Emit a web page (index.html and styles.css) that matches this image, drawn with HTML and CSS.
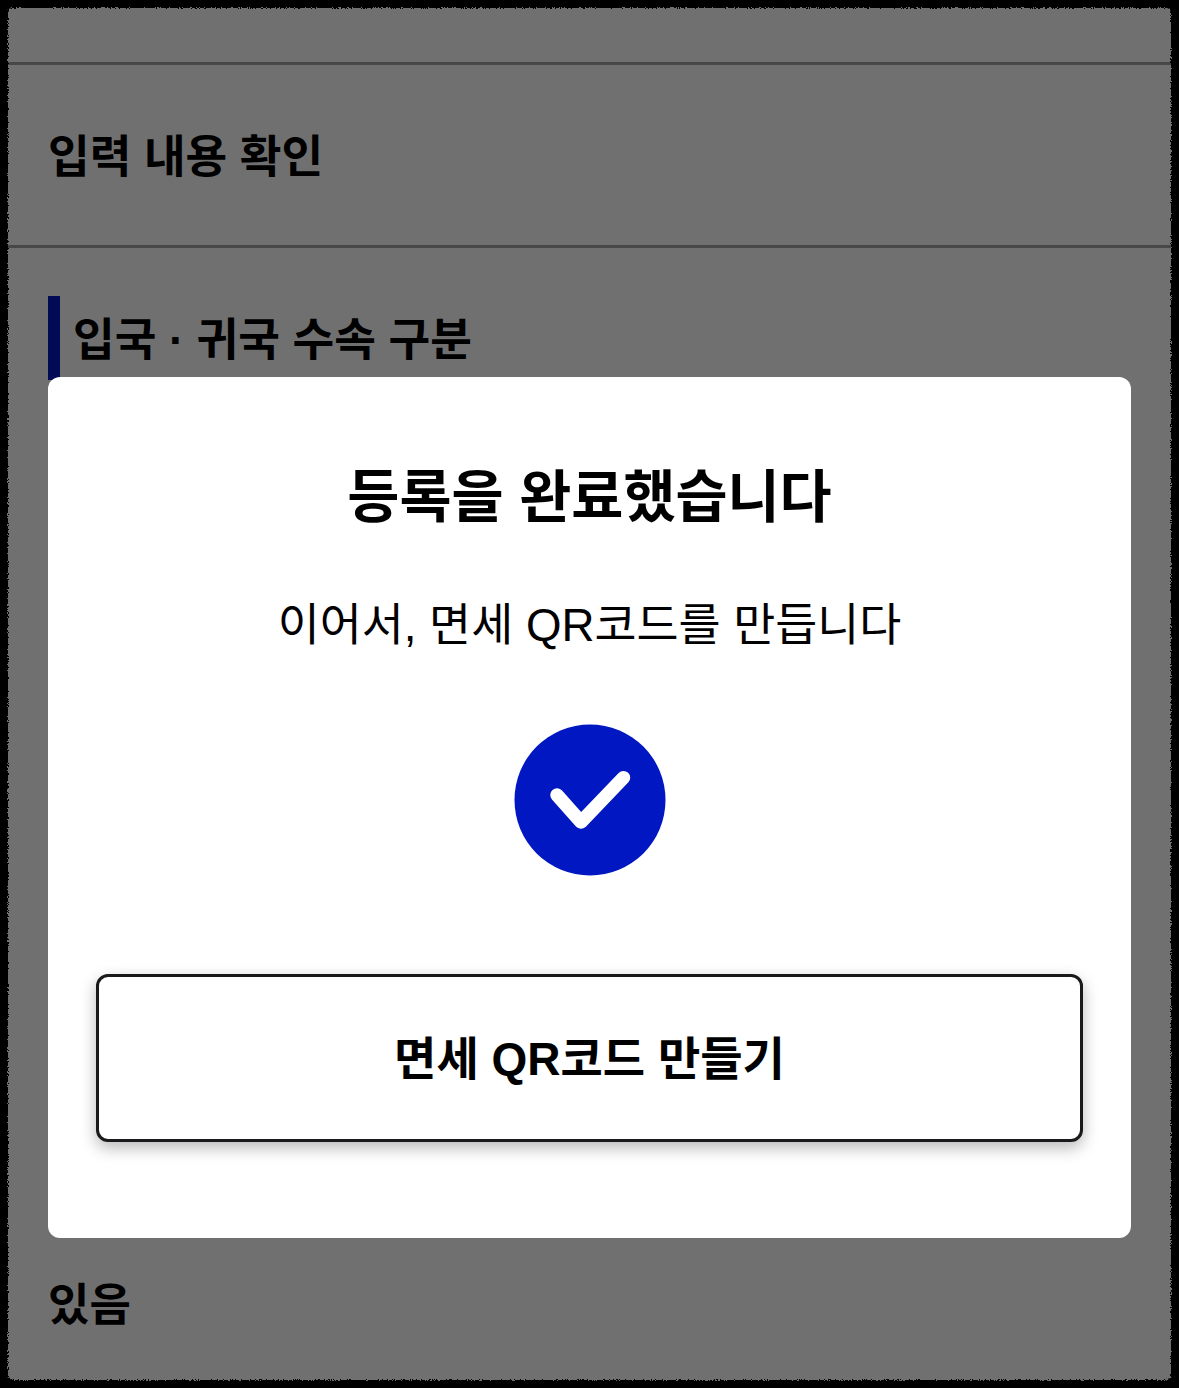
FILE: index.html
```html
<!DOCTYPE html>
<html lang="ko">
<head>
<meta charset="utf-8">
<title>입력 내용 확인</title>
<link rel="stylesheet" href="styles.css">
</head>
<body>
<main class="frame">
  <div class="top-row"></div>
  <h1 class="page-title">입력 내용 확인</h1>
  <section class="section">
    <h2 class="section-title">입국 · 귀국 수속 구분</h2>
    <p class="answer">있음</p>
  </section>
  <div class="scrim"></div>
  <div class="modal" role="dialog">
    <h2 class="modal-title">등록을 완료했습니다</h2>
    <p class="modal-text">이어서, 면세 QR코드를 만듭니다</p>
    <svg class="check" viewBox="0 0 152 152" aria-hidden="true">
      <circle cx="76" cy="76" r="75.5" fill="#0017c1"/>
      <path d="M43 71 L67 98 L109.5 53.7" fill="none" stroke="#fff" stroke-width="13.5" stroke-linecap="round" stroke-linejoin="round"/>
    </svg>
    <button class="modal-button" type="button">면세 QR코드 만들기</button>
  </div>
</main>
<svg class="filters" aria-hidden="true">
  <filter id="rough" x="-2%" y="-2%" width="104%" height="104%">
    <feTurbulence type="fractalNoise" baseFrequency="0.9" numOctaves="2" seed="4"/>
    <feDisplacementMap in="SourceGraphic" scale="4" xChannelSelector="R" yChannelSelector="G"/>
  </filter>
</svg>
<div class="edge"></div>
</body>
</html>
```
FILE: styles.css
```css
* { box-sizing: border-box; }
html, body { margin: 0; height: 100%; }
body {
  background: #000;
  padding: 8px;
  font-family: "Liberation Sans", "Noto Sans CJK KR", sans-serif;
  color: #000;
}
.frame {
  position: relative;
  height: 1373px;
  background: #fff;
  border-radius: 5px;
  box-shadow: 0 0 0 3px #707070;
  overflow: hidden;
  display: flex;
  flex-direction: column;
}
.top-row {
  height: 57px;
  border-bottom: 3px solid #a5a5a5;
  flex: none;
}
.page-title {
  margin: 0;
  height: 183px;
  flex: none;
  padding: 0 40px 4px;
  display: flex;
  align-items: center;
  font-size: 45.3px;
  font-weight: 700;
  border-bottom: 3px solid #a5a5a5;
}
.section {
  flex: 1;
  display: flex;
  flex-direction: column;
  padding: 48px 40px 45px;
}
.section-title {
  margin: 0;
  height: 84px;
  padding: 15px 0 0 13px;
  border-left: 12px solid #0017c1;
  font-size: 45.3px;
  font-weight: 700;
  line-height: 60px;
}
.answer {
  margin: auto 0 0;
  font-size: 45px;
  font-weight: 700;
  line-height: 60px;
}
.scrim {
  position: absolute;
  inset: 0;
  background: rgba(0, 0, 0, 0.56);
}
.modal {
  position: absolute;
  left: 40px;
  top: 369px;
  width: 1083px;
  height: 861px;
  padding: 86px 48px 0;
  background: #fff;
  border-radius: 12px;
  display: flex;
  flex-direction: column;
  align-items: center;
}
.modal-title {
  margin: 0;
  font-size: 56.6px;
  font-weight: 700;
  line-height: 70px;
}
.modal-text {
  margin: 63px 0 0;
  font-size: 45.7px;
  line-height: 60px;
}
.check {
  display: block;
  width: 152px;
  height: 152px;
  margin-top: 68px;
}
.modal-button {
  width: 100%;
  height: 168px;
  margin-top: 98px;
  padding: 0 0 7px;
  background: #fff;
  border: 3px solid #1a1a1c;
  border-radius: 12px;
  box-shadow: 0 6px 16px rgba(0, 0, 0, 0.28);
  font: 700 46px "Liberation Sans", "Noto Sans CJK KR", sans-serif;
  color: #000;
}
.filters {
  position: absolute;
  width: 0;
  height: 0;
}
.edge {
  position: fixed;
  inset: -6px;
  border: 14px solid #000;
  border-radius: 19px;
  filter: url(#rough);
  pointer-events: none;
}
```
